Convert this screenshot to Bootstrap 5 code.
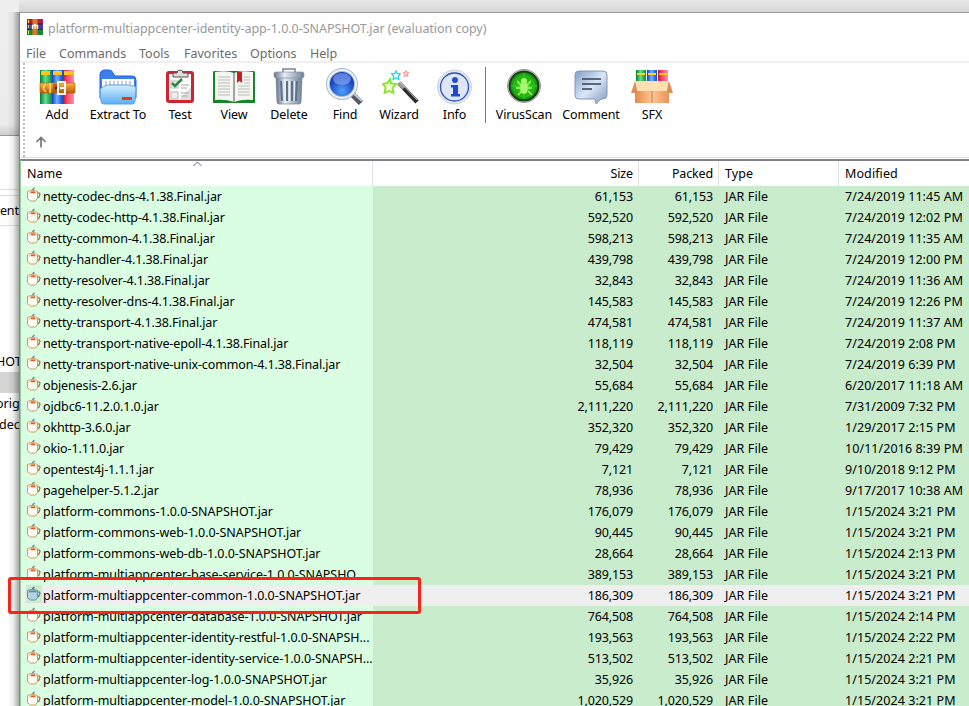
<!DOCTYPE html>
<html lang="en">
<head>
<meta charset="utf-8">
<title>Archive viewer</title>
<link rel="stylesheet" href="https://cdn.jsdelivr.net/npm/bootstrap@5.3.0/dist/css/bootstrap.min.css">
<style>
html,body{height:100%;overflow:hidden}
body{font:12.5px/21px "Noto Sans","Open Sans",sans-serif;color:#000;background:#fff}
.desk{width:969px;height:706px;background:#fff}
.behind{width:19px;overflow:hidden;white-space:nowrap;position:relative}
.behind::after{content:"";position:absolute;inset:12px 0 0 0;background:linear-gradient(90deg,#0000 7px,#0001 13px,#0005)}
.behind>div{flex:none}
.b-top{height:136px;background:linear-gradient(#eee,#ececec 92%,#ccc);border-bottom:1px solid #999}
.b-gap{height:54px;border-bottom:1px solid #ddd}
.b-gap2{height:6px;border-bottom:1px solid #ddd}
.b-ent{height:30px;line-height:29px;border-bottom:1px solid #ddd;letter-spacing:-.2px}
.b-blank{height:125px}
.b-sel{background:#d5d5d5}
.b-r{margin-left:-4px}
.b-d{margin-left:-1px}
.strip{height:12px;background:linear-gradient(#e8e8e8,#d5d5d5)}
.win{height:694px;background:#fff;border-top:1px solid #999;border-left:1px solid #888}
.ttl{height:30px;color:#999;padding:0 0 0 7px;letter-spacing:-.04px}
.ttl svg{margin-right:5px;position:relative;top:-1px}
.mnu{display:grid;grid-template-columns:33px 80px 45px 66px 60px 1fr;height:20px;color:#6b6b6b;padding-left:6px;border-bottom:2px solid #f0f0f0}
.tools{height:95px;border-bottom:1px solid #ddd}
.grip{width:2px;margin-left:3px;background:repeating-linear-gradient(#bbb 0 2px,#fff 2px 4px)}
.tb{display:grid;grid-template-columns:48px 74px 50px 58px 52px 60px 48px 63px 76px 58px 64px;margin-left:8px;padding-top:4px;height:73px}
.tb>div{white-space:nowrap;letter-spacing:-.1px}
.tb svg{width:42px;height:40px;flex:none;margin-bottom:-3px}
.tb .sep{box-shadow:-1px 0 #777;height:56px}
.up{margin-left:10px}
.lst{margin-top:1px;border-top:2px solid #808088;border-left:1px solid #9c9;flex:1;min-height:0;overflow:hidden}
.rw{display:grid;grid-template-columns:352px 266px 80px 120px 1fr;height:21px;background:#c8eccc;white-space:nowrap}
.rw>*{overflow:hidden;height:21px}
.rw .nm{background:#d9fee1;display:flex;padding-left:5px;letter-spacing:-.13px}
.rw.plat .nm{letter-spacing:-.06px}
.rw svg{width:16px;height:18px;flex:none;margin-right:1px}
.rw .n{text-align:right;padding-right:6px;letter-spacing:-.15px}
.rw .t{padding-left:6px;letter-spacing:.1px}
.rw .dt{letter-spacing:.06px}
.rw.on,.rw.on .nm{background:#efefef}
.rw.on svg{background:#c8eccc}
.rw.hd,.rw.hd .nm{background:#fff;height:25px}
.hd>*{height:25px;line-height:25px;border-right:1px solid #e2e2e2}
.hd>:last-child{border:0}
.rw.hd .n{padding-right:5px}
.rw.hd .nm{padding-left:6px;letter-spacing:0}
.caret{left:172px;top:0;width:9px;height:6px}
.red{left:8px;top:577px;width:413px;height:37px;border:3px solid #fb2317;border-radius:3px}
</style>
<script src="https://cdn.jsdelivr.net/npm/bootstrap@5.3.0/dist/js/bootstrap.bundle.min.js"></script>
</head>
<body>
<svg width="0" height="0" class="position-absolute">
<defs>
<linearGradient id="gG"><stop stop-color="#087b34"/><stop offset=".45" stop-color="#5fe08a"/><stop offset="1" stop-color="#0b8a3c"/></linearGradient>
<linearGradient id="gB"><stop stop-color="#0b3fc4"/><stop offset=".45" stop-color="#6fb1ff"/><stop offset="1" stop-color="#1246c9"/></linearGradient>
<linearGradient id="gR"><stop stop-color="#c80d35"/><stop offset=".4" stop-color="#ff4b68"/><stop offset="1" stop-color="#ff8fb4"/></linearGradient>
<linearGradient id="gO" x2="0" y2="1"><stop stop-color="#ffb43c"/><stop offset="1" stop-color="#b65a0a"/></linearGradient>
<linearGradient id="gF" x2="0" y2="1"><stop stop-color="#d5efff"/><stop offset="1" stop-color="#5aaef2"/></linearGradient>
<linearGradient id="gS"><stop stop-color="#5f7288"/><stop offset=".35" stop-color="#e8eff6"/><stop offset="1" stop-color="#6d8096"/></linearGradient>
<linearGradient id="gC" x2="1" y2="1"><stop stop-color="#7f9cc4"/><stop offset=".5" stop-color="#dbe7f8"/><stop offset="1" stop-color="#7f97bd"/></linearGradient>
<radialGradient id="gL" cy=".75"><stop stop-color="#4fa0ff"/><stop offset="1" stop-color="#1540b8"/></radialGradient>
<radialGradient id="gV"><stop stop-color="#4bea19"/><stop offset="1" stop-color="#118a0c"/></radialGradient>
<linearGradient id="gX"><stop stop-color="#e58a4c"/><stop offset=".5" stop-color="#ffc592"/><stop offset="1" stop-color="#e9925a"/></linearGradient>
<symbol id="cup" viewBox="0 0 16 18"><path d="M5.500 5.500 7 3.500 8.500 2" stroke="#789" stroke-width="1.600" fill="none"/><path d="M11.500 7h2l.5 1-1 3-2 1.300" fill="none" stroke="#a86a2e" stroke-width="1.200"/><path d="M1.500 5.500c2-1.200 8-1.200 10 0v7l-2 2.500h-5l-3-2.300z" fill="#fffdf6" stroke="#cf9a60"/><path d="M3 6.500h7.500" stroke="#fbc597" stroke-width="2"/><path d="M5 6.300h4" stroke="#e4572a" stroke-width="1.600"/></symbol>
<symbol id="cupsel" viewBox="0 0 16 18"><path d="M5.500 5.500 7 3.500 8.500 2" stroke="#567" stroke-width="1.600" fill="none"/><path d="M11.500 7h2l.5 1-1 3-2 1.300" fill="none" stroke="#55788e" stroke-width="1.200"/><path d="M1.500 5.500c2-1.200 8-1.200 10 0v7l-2 2.500h-5l-3-2.300z" fill="#b2d3e6" stroke="#6a8fa4"/><path d="M3 6.500h7.500" stroke="#67849b" stroke-width="1.600"/></symbol>
</defs>
</svg>
<div class="desk d-flex position-relative overflow-hidden">
  <div class="behind d-flex flex-column">
    <div class="b-top"></div><div class="b-gap"></div><div class="b-gap2"></div><div class="b-ent">ento</div><div class="b-blank"></div>
    <div class="b-r">HOT</div><div class="b-sel">&nbsp;</div><div class="b-r">orig</div><div class="b-d">dec</div>
  </div>
  <div class="flex-grow-1 d-flex flex-column">
    <div class="strip flex-shrink-0"></div>
    <div class="win d-flex flex-column">
      <div class="ttl d-flex align-items-center flex-shrink-0">
        <svg width="16" height="16" viewBox="0 0 16 16"><path d="M0 0h16v5H0z" fill="#b91a48"/><path d="M0 5h16v5.500H0z" fill="#4a3fae"/><path d="M0 10.500h16V16H0z" fill="#128a3c"/><path d="M0 5h16M0 10.300h16" stroke="#222"/><path d="M1.500 1v3m0 2v3m0 2.500v3.500" stroke="#ffd52e"/><path d="M5.500 0h5v16h-5z" fill="#dc7a22"/><path d="M5.500 10V6.500h5V10M8 5v5" stroke="#fff" stroke-width="1.300" fill="none"/></svg>
        <span>platform-multiappcenter-identity-app-1.0.0-SNAPSHOT.jar (evaluation copy)</span>
      </div>
      <div class="mnu flex-shrink-0"><span>File</span><span>Commands</span><span>Tools</span><span>Favorites</span><span>Options</span><span>Help</span></div>
      <div class="tools d-flex flex-shrink-0">
        <div class="grip"></div>
        <div>
          <div class="tb">
            <div class="d-flex flex-column align-items-center"><svg viewBox="0 0 42 40"><path d="M4 3h12v34H4z" fill="url(#gG)"/><path d="M16 3h11v34H16z" fill="url(#gB)"/><path d="M27 3h11v34H27z" fill="url(#gR)"/><path d="M5 4h9v4H5zm12 0h9v4h-9zm11 0h9v4h-9z" fill="#ffc51c"/><path d="M4 16h35v10H4z" fill="url(#gO)" stroke="#a9590b" stroke-width=".6"/><path d="M10 17q-5 4 0 8M14 16v10" stroke="#ffe06a" stroke-width="1.500" fill="none"/><path d="M17 17h6v8h-6z" fill="#b55e0d"/><path d="M22 15h7v12h-7z" fill="none" stroke="#f6f6f6" stroke-width="2"/><path d="M24 21h5" stroke="#fff" stroke-width="2"/><path d="M19 21h2" stroke="#321" stroke-width="2"/></svg><span>Add</span></div>
            <div class="d-flex flex-column align-items-center"><svg viewBox="0 0 42 40"><path d="M3 8q0-5 5-5h4q3 0 4 3l2 3h17q4 0 4 4v18H3z" fill="#3a7ef0" stroke="#2463d8"/><path d="M5 12h32v14H5z" fill="#fff"/><path d="M9 14v5m4-5v5m4-5v5m4-5v5m4-5v5m4-5v5m4-5v5" stroke="#c9ced4" stroke-width="2"/><path d="M5 21q1-2 3-2l2-1h22l2 1h3q2 0 2 3l-1 12q0 3-3 3H7q-3 0-3-3L3 22z" fill="url(#gF)" stroke="#55a5ee"/><path d="M25 30h10v3H25z" fill="#e23b15"/></svg><span>Extract To</span></div>
            <div class="d-flex flex-column align-items-center"><svg viewBox="0 0 42 40"><rect x="7" y="4" width="28" height="32" rx="3" fill="#d02530"/><path d="M10 7h22v26H10z" fill="#fafafa"/><path d="M32 20v13H20z" fill="#ddd"/><path d="M14 10V6h4q0-3 3-3t3 3h5v4z" fill="#ddd" stroke="#555"/><path d="M12 14h7v7h-7zm0 11h7v7h-7z" fill="#eee" stroke="#bbb"/><path d="m13 16 3 3 7-7" fill="none" stroke="#278b35" stroke-width="2.500"/><path d="M22 18h8m-8 3h6m-6 5h8m-8 3h6" stroke="#aaa"/></svg><span>Test</span></div>
            <div class="d-flex flex-column align-items-center"><svg viewBox="0 0 42 40"><path d="M0 5q0-1 2-1h38q2 0 2 1v31H0z" fill="#15852a"/><path d="M2 5q12-2 19 1 7-3 19-1v28q-11-1-19 2-8-3-19-2z" fill="#f5f5f2"/><path d="M21 6v29" stroke="#888" stroke-width="1.500"/><path d="M5 10h12M5 13h12M5 16h12M5 19h12M5 22h12M5 25h12M5 28h12M25 19h12M25 22h12M25 25h12M25 28h12M31 10h6m-6 3h6m-6 3h6" stroke="#bbb"/><path d="M24 5h5v11l-2.500-2-2.500 2z" fill="#c71e1e"/></svg><span>View</span></div>
            <div class="d-flex flex-column align-items-center"><svg viewBox="0 0 42 40"><path d="M15 5V2h12v3" fill="none" stroke="#71849a" stroke-width="1.500"/><path d="M8 10h26l-1 25q0 2-2 2H11q-2 0-2-2z" fill="url(#gS)" stroke="#708298" stroke-width=".7"/><path d="m13 14 1 20m5-20v20m5-20v20m5-20-1 20" stroke="#5f7186" stroke-width="2"/><path d="m16 14 .5 20m5-20v20m5-20-.5 20" stroke="#edf2f7"/><rect x="6" y="5" width="30" height="6" rx="2" fill="url(#gS)" stroke="#8092a6" stroke-width=".7"/></svg><span>Delete</span></div>
            <div class="d-flex flex-column align-items-center"><svg viewBox="0 0 42 40"><path d="m28 27 9 9" stroke="#525a64" stroke-width="6"/><path d="m29 26 9 8" stroke="#c7ccd2" stroke-width="2"/><circle cx="18" cy="17" r="14" fill="url(#gL)" stroke="#a9bacb" stroke-width="4"/><circle cx="18" cy="17" r="14" fill="none" stroke="#eef3f8" stroke-width="2"/><ellipse cx="18" cy="12" rx="9" ry="6" fill="#9ab8ff" opacity=".55"/></svg><span>Find</span></div>
            <div class="d-flex flex-column align-items-center"><svg viewBox="0 0 42 40"><path d="m21 16 18 19" stroke="#2b2b2b" stroke-width="4.500"/><path d="m21 16 5 5" stroke="#999" stroke-width="4.500"/><path d="m22 15 17 18" stroke="#ccc"/><path d="m12 12 1 4.500 5 .5-3.500 4 1 5-4.500-2-4.500 2 1-5.500L5 17l4.500-1z" fill="#efffcf" stroke="#85e523" stroke-width="1.800"/><path d="m18 4 1.300 2.700h3l-2 2.800.7 3-3-1.500-3 1.500.7-3-2-2.800h3z" fill="#e9ffff" stroke="#21d4ee" stroke-width="1.200"/><path d="m28 3.500.8 1.800h2.200l-1.700 1.800.8 2.400-2.100-1.200-2.100 1.200.8-2.400L25 5.300h2.200z" fill="#ffd5d5" stroke="#f58080" stroke-width=".8"/></svg><span>Wizard</span></div>
            <div class="d-flex flex-column align-items-center"><svg viewBox="0 0 42 40"><circle cx="20.500" cy="20" r="17" fill="#e2e6ec" stroke="#d0d4da"/><circle cx="20.500" cy="20" r="14" fill="#dce6f6" stroke="#244fc0" stroke-width="1.300"/><circle cx="21" cy="13" r="3" fill="#2450d0"/><path d="M17 18h7v9h2v2.500h-9V27h2v-6.500h-2z" fill="#2047cf"/></svg><span>Info</span></div>
            <div class="sep d-flex flex-column align-items-center"><svg viewBox="0 0 42 40"><circle cx="21" cy="19" r="16.500" fill="#d5d9d5" stroke="#999"/><circle cx="21" cy="19" r="14.500" fill="url(#gV)" stroke="#173d18" stroke-width="2"/><path d="M21 6v26M8 19h26" stroke="#3d3" stroke-width=".8"/><circle cx="21" cy="19" r="10.500" fill="none" stroke="#2ac422"/><ellipse cx="21" cy="21" rx="4" ry="6" fill="#a5f96d"/><circle cx="21" cy="14" r="3" fill="#a5f96d"/><path d="m14 14 4 4m10-4-4 4m-11 3h4m8 0h4m-14 7 4-4m10 4-4-4" stroke="#a5f96d" stroke-width="1.500"/></svg><span>VirusScan</span></div>
            <div class="d-flex flex-column align-items-center"><svg viewBox="0 0 42 40"><path d="M9 4h24q4 0 4 4v20q0 4-4 4h-2l-5 5-1-5H9q-4 0-4-4V8q0-4 4-4z" fill="url(#gC)" stroke="#8598b6"/><path d="M12 12h19m-19 5h19m-19 5h10" stroke="#354255" stroke-width="1.600"/></svg><span>Comment</span></div>
            <div class="d-flex flex-column align-items-center"><svg viewBox="0 0 42 40"><path d="M5 3h10v13H5z" fill="url(#gG)"/><path d="M16 3h10v13H16z" fill="url(#gB)"/><path d="M27 3h10v13H27z" fill="url(#gR)"/><path d="M6 7h8m3 0h8m3 0h8" stroke="#ffd51e" stroke-width="2"/><path d="M4 15h34v21H4z" fill="url(#gX)"/><path d="M4 14h34l-2 10H6z" fill="#ffe0b0"/><path d="M4 14 0 26h4l2-2zm34 0 4 12h-4l-2-2z" fill="#dd8d5a"/><path d="M21 24v12" stroke="#cd7845"/></svg><span>SFX</span></div>
          </div>
          <svg class="up d-block" width="12" height="12" viewBox="0 0 12 12"><path d="M6 11.500V2M1.500 6 6 1.500 10.500 6" fill="none" stroke="#777" stroke-width="1.700"/></svg>
        </div>
      </div>
      <div class="lst position-relative">
        <div class="rw hd"><div class="nm">Name</div><div class="n">Size</div><div class="n">Packed</div><div class="t">Type</div><div class="t">Modified</div></div>
        <svg class="caret position-absolute" viewBox="0 0 9 6"><path d="M.5 5 4.500 1l4 4" fill="none" stroke="#666"/></svg>
        <div id="rows"></div>
      </div>
    </div>
  </div>
  <div class="red position-absolute"></div>
</div>
<script>
const files = `netty-codec-dns-4.1.38.Final.jar|61,153|7/24/2019 11:45 AM
netty-codec-http-4.1.38.Final.jar|592,520|7/24/2019 12:02 PM
netty-common-4.1.38.Final.jar|598,213|7/24/2019 11:35 AM
netty-handler-4.1.38.Final.jar|439,798|7/24/2019 12:00 PM
netty-resolver-4.1.38.Final.jar|32,843|7/24/2019 11:36 AM
netty-resolver-dns-4.1.38.Final.jar|145,583|7/24/2019 12:26 PM
netty-transport-4.1.38.Final.jar|474,581|7/24/2019 11:37 AM
netty-transport-native-epoll-4.1.38.Final.jar|118,119|7/24/2019 2:08 PM
netty-transport-native-unix-common-4.1.38.Final.jar|32,504|7/24/2019 6:39 PM
objenesis-2.6.jar|55,684|6/20/2017 11:18 AM
ojdbc6-11.2.0.1.0.jar|2,111,220|7/31/2009 7:32 PM
okhttp-3.6.0.jar|352,320|1/29/2017 2:15 PM
okio-1.11.0.jar|79,429|10/11/2016 8:39 PM
opentest4j-1.1.1.jar|7,121|9/10/2018 9:12 PM
pagehelper-5.1.2.jar|78,936|9/17/2017 10:38 AM
platform-commons-1.0.0-SNAPSHOT.jar|176,079|1/15/2024 3:21 PM
platform-commons-web-1.0.0-SNAPSHOT.jar|90,445|1/15/2024 3:21 PM
platform-commons-web-db-1.0.0-SNAPSHOT.jar|28,664|1/15/2024 2:13 PM
platform-multiappcenter-base-service-1.0.0-SNAPSHO...|389,153|1/15/2024 3:21 PM
platform-multiappcenter-common-1.0.0-SNAPSHOT.jar|186,309|1/15/2024 3:21 PM
platform-multiappcenter-database-1.0.0-SNAPSHOT.jar|764,508|1/15/2024 2:14 PM
platform-multiappcenter-identity-restful-1.0.0-SNAPSH...|193,563|1/15/2024 2:22 PM
platform-multiappcenter-identity-service-1.0.0-SNAPSH...|513,502|1/15/2024 2:21 PM
platform-multiappcenter-log-1.0.0-SNAPSHOT.jar|35,926|1/15/2024 3:21 PM
platform-multiappcenter-model-1.0.0-SNAPSHOT.jar|1,020,529|1/15/2024 3:21 PM`.split('\n').map(l => l.split('|'));
document.getElementById('rows').innerHTML = files.map(([n, s, d], i) =>
  `<div class="rw${i === 19 ? ' on' : ''}${n.startsWith('platform') ? ' plat' : ''}"><div class="nm"><svg><use href="#${i === 19 ? 'cupsel' : 'cup'}"/></svg><span>${n}</span></div><div class="n">${s}</div><div class="n">${s}</div><div class="t">JAR File</div><div class="t dt">${d}</div></div>`).join('');
</script>
</body>
</html>
